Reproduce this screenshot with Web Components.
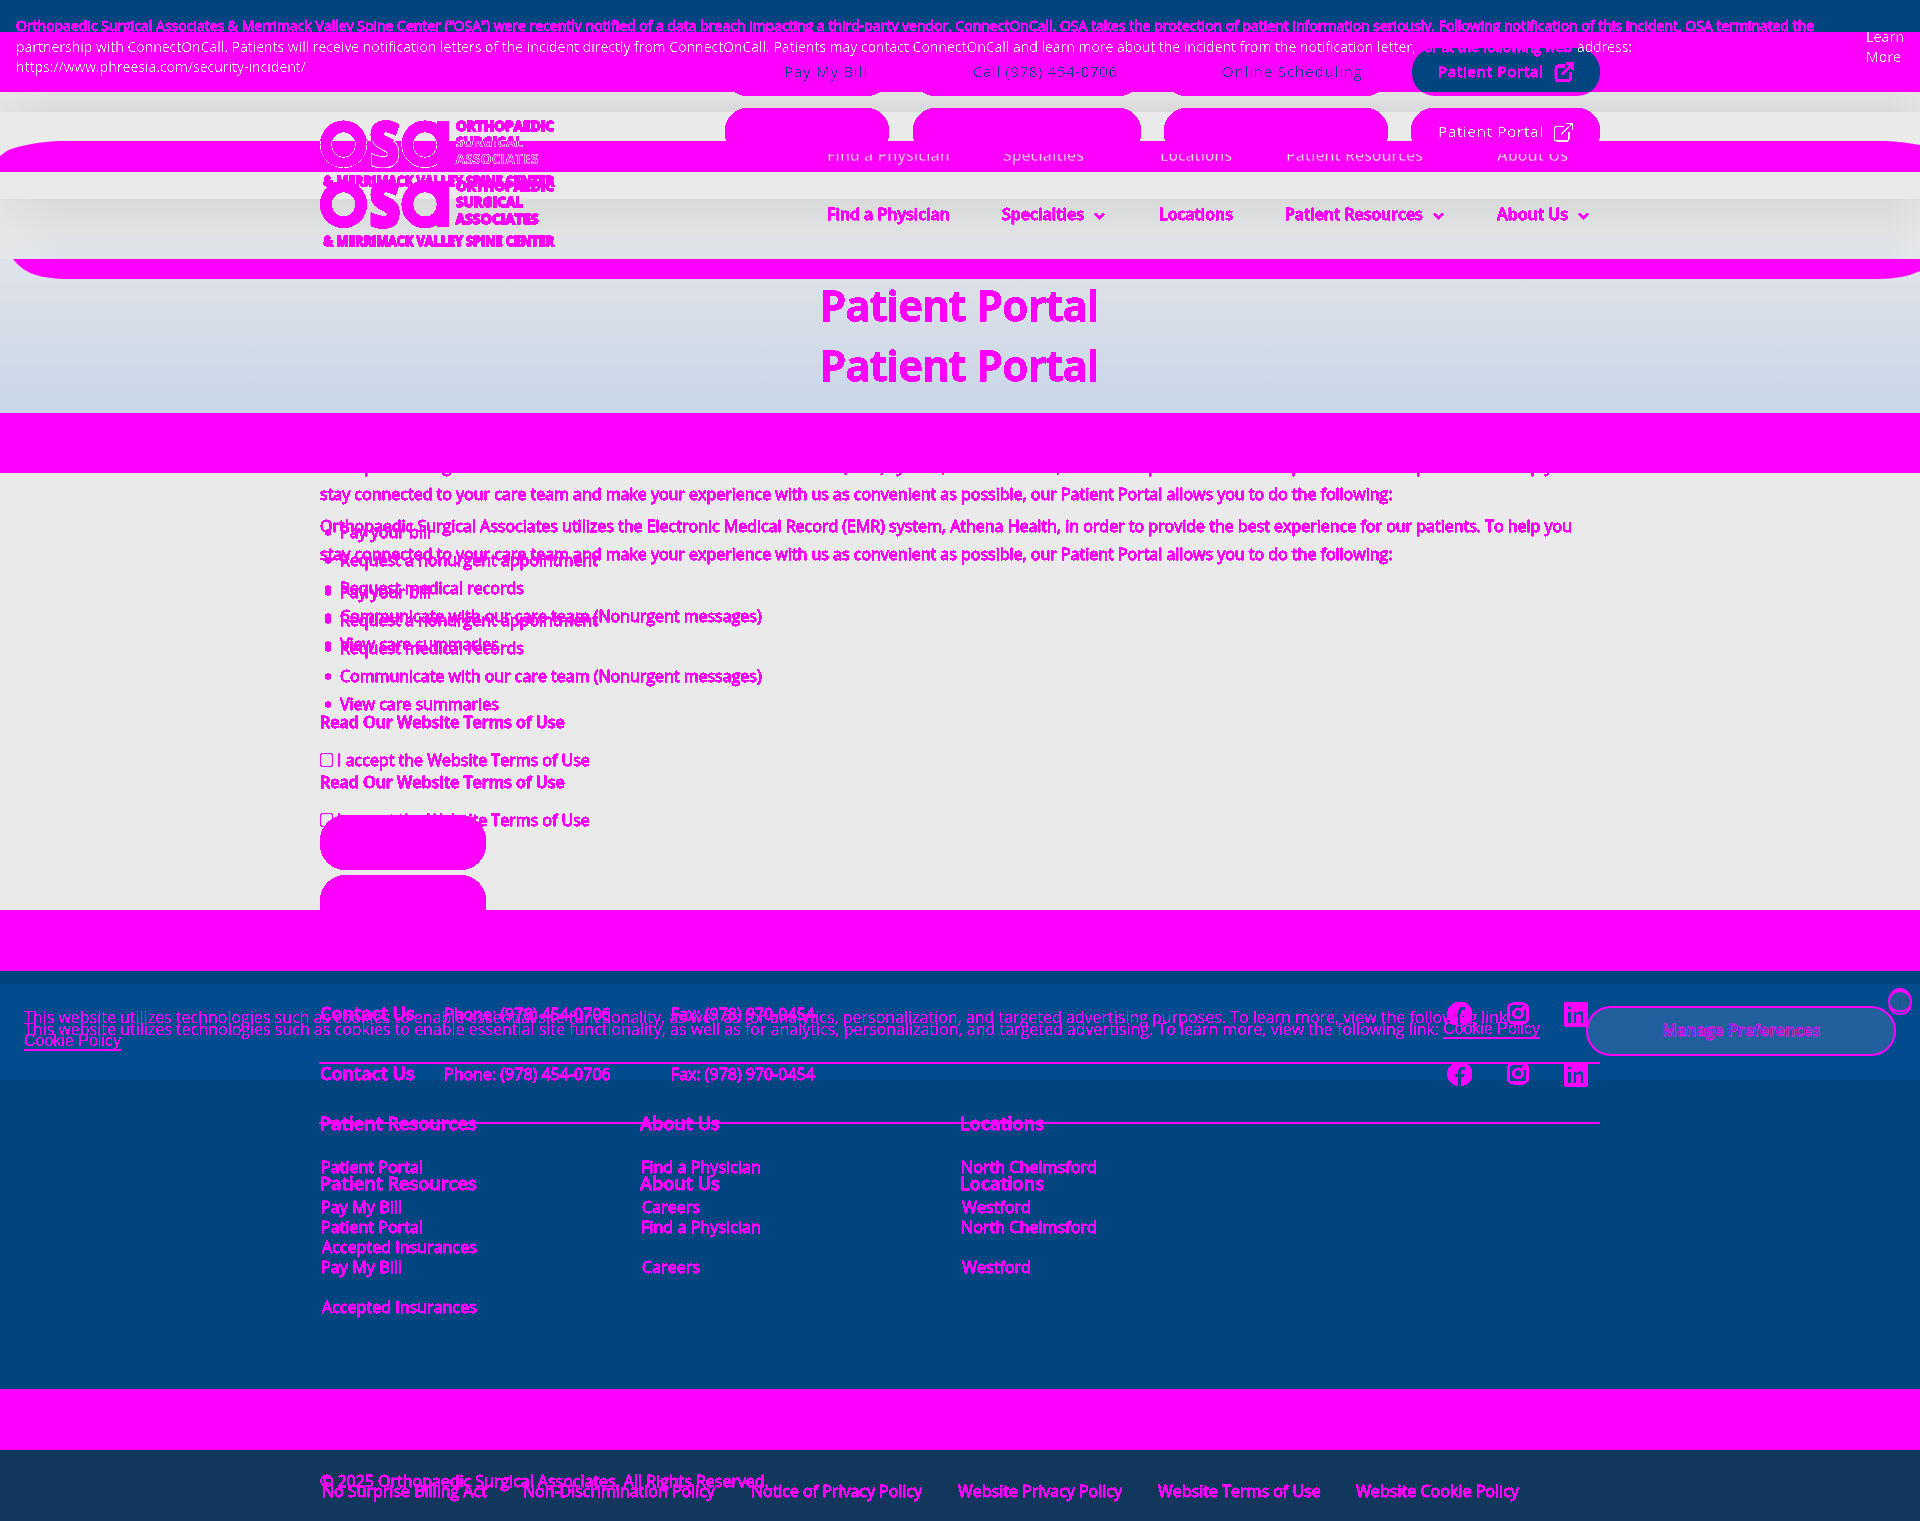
<!DOCTYPE html>
<html lang="en">
<head>
<meta charset="utf-8">
<title>Patient Portal</title>
<style>
html,body{margin:0;padding:0}
body{width:1920px;height:1521px;overflow:hidden;font-family:"Open Sans","Noto Sans",sans-serif;background:#eaeaea}
</style>
</head>
<body>
<portal-page></portal-page>
<script>
const M = '#ff00ff', BLUE = '#004480', LIGHT = '#eaeaea';
const FAMILY = '"Open Sans","Noto Sans",sans-serif';
const ctx = document.createElement('canvas').getContext('2d');

function shadow(el, html) {
  const t = document.createElement('template');
  t.innerHTML = html;
  const root = el.attachShadow({mode: 'open'});
  root.appendChild(t.content.cloneNode(true));
  return root;
}

/* One line of text sized to a given width. */
customElements.define('fit-text', class extends HTMLElement {
  connectedCallback() {
    if (this.shadowRoot) return;
    const w = +this.getAttribute('w'), weight = this.getAttribute('weight') || 400;
    const fam = this.getAttribute('family') || FAMILY;
    const text = this.textContent;
    let fs = +this.getAttribute('size'), ls = 0;
    ctx.font = `${weight} 100px ${fam}`;
    const m = ctx.measureText(text).width / 100;
    if (fs) ls = (w - m * fs) / Math.max(1, text.length - 1); else fs = w / m;
    const ru = Math.round(1.069 * fs), rd = Math.round(.293 * fs);
    this.top = Math.round(+this.getAttribute('base') - ((20 - ru - rd) / 2 + ru));
    shadow(this, `<style>:host{display:block;flex:none;box-sizing:border-box;width:${w}px;height:20px;line-height:20px;white-space:pre;
      font:${weight} ${fs}px/20px ${fam.replace(/"/g, "'")};letter-spacing:${ls}px}</style><slot></slot>`);
  }
});

/* Logo: ring, letter, ring with a stem, and the name beside and below. */
customElements.define('osa-logo', class extends HTMLElement {
  connectedCallback() {
    const line = this.hasAttribute('outline');
    const paint = line ? `fill="${M}" stroke="${LIGHT}" stroke-width="1.1"` : `fill="${M}" stroke="${M}" stroke-width="1"`;
    shadow(this, `<style>:host{display:block;flex:none;width:236px;height:70px;-webkit-text-stroke:0}svg{display:block}text{font-family:${FAMILY}}
      .clip{clip-path:inset(21px 0 18px 0)}</style>
      <svg width="236" height="70" class="${line ? 'clip' : ''}">
      <g ${line ? `fill="none" stroke="${LIGHT}" stroke-width="1"` : `fill="none" stroke="${M}" stroke-width="11.3"`}>
      ${line ? '<ellipse cx="23.5" cy="24.4" rx="23.4" ry="23.4"/><ellipse cx="23.5" cy="24.4" rx="12" ry="13"/><ellipse cx="105" cy="24.4" rx="23.4" ry="23.4"/><ellipse cx="105" cy="24.4" rx="12" ry="13"/>'
             : '<ellipse cx="23.5" cy="24.4" rx="17.6" ry="18"/><ellipse cx="105" cy="24.4" rx="17.6" ry="18"/>'}</g>
      <rect x="117" y="1" width="12" height="45.5" fill="${M}"/>
      <text ${paint} x="48.5" y="47" font-size="81" font-weight="800" textLength="33" lengthAdjust="spacingAndGlyphs">s</text>
      <g ${line ? `fill="${M}" stroke="${LIGHT}" stroke-width=".7"` : `fill="${M}" stroke="${M}" stroke-width=".9"`} font-weight="700" font-size="14">
      <text x="136" y="11" textLength="98" lengthAdjust="spacingAndGlyphs">ORTHOPAEDIC</text>
      <text x="136" y="27.400" textLength="67" lengthAdjust="spacingAndGlyphs">SURGICAL</text>
      <text x="135.5" y="44" textLength="83" lengthAdjust="spacingAndGlyphs">ASSOCIATES</text>
      <text x="3.5" y="65.800" textLength="230.5" lengthAdjust="spacingAndGlyphs">&amp; MERRIMACK VALLEY SPINE CENTER</text>
      </g></svg>`);
  }
});

const ICONS = {
  fb: `<path fill="${M}" fill-rule="evenodd" d="M12 0a12 12 0 0 0-2 23.9V15.500H7v-3.500h3V9.300C10 6.300 11.800 4.700 14.500 4.700c1.300 0 2.600.2 2.600.2v3h-1.500c-1.500 0-1.900.9-1.900 1.800V12H17l-.5 3.500h-2.800v8.400A12 12 0 0 0 12 0z"/>`,
  ig: `<g fill="none" stroke="${M}" stroke-width="2.300"><rect x="2.200" y="2.800" width="19.600" height="19.200" rx="5"/><circle cx="12" cy="12.400" r="4.500"/></g><circle cx="17.600" cy="7" r="1.700" fill="${M}"/>`,
  li: `<path fill="${M}" fill-rule="evenodd" d="M2 0h20a2 2 0 0 1 2 2v20.600a2 2 0 0 1-2 2H2a2 2 0 0 1-2-2V2a2 2 0 0 1 2-2zM4 9.300V21.200h3V9.300zM5.500 4a1.800 1.800 0 1 0 0 3.700 1.800 1.800 0 0 0 0-3.700zM9.500 9.300V21.200h3v-6.300c0-3.600 4.300-3.800 4.300 0v6.300h3v-7.600c0-5.500-5.300-5.700-7.400-2.800V9.300z"/>`,
  chev: `<path fill="none" stroke="${M}" stroke-width="2.400" d="M1 .5l4.500 4.500L10 .5"/>`,
  ext: `<path fill="none" stroke="${M}" stroke-width="2.300" d="M11 4H4.500a2.500 2.500 0 0 0-2.500 2.500V16a2.500 2.500 0 0 0 2.500 2.500H14a2.500 2.500 0 0 0 2.500-2.500V10M8 12.500L17.500 3M12.500 1.600h6.300V8"/>`,
  extthin: `<path fill="none" stroke="${LIGHT}" stroke-width="1.300" d="M11 4.500H3.500a2 2 0 0 0-2 2V17a2 2 0 0 0 2 2H14a2 2 0 0 0 2-2V9.500M8 12.500L19 2M13 1.500h6.500V8"/>`,
  box: `<rect x=".5" y=".5" width="12" height="13" rx="1.500" fill="none" stroke="${M}"/>`,
  dot: `<circle cx="3" cy="2.500" r="2.900" fill="${M}"/>`,
  ring: `<ellipse cx="12" cy="13.500" rx="11.500" ry="13" fill="#1f5c96"/><path d="M12 6v15M3 16c6 2 12 2 18-1" stroke="#1a5590" fill="none"/><path fill="${M}" fill-rule="evenodd" d="M12 0a12 13.500 0 0 1 12 14H22.300a10.300 10 0 0 0-20.600 0H0A12 13.500 0 0 1 12 0z"/><path d="M1 13c0 7.500 5 10.200 11 10.200S23 20 23 13M1 18c3.500 11 18.500 11 22 0" fill="none" stroke="${M}" stroke-width="1.700"/>`
};
customElements.define('ui-icon', class extends HTMLElement {
  connectedCallback() {
    const w = this.getAttribute('w'), h = this.getAttribute('h');
    shadow(this, `<style>:host{display:block;flex:none;width:${w}px;height:${h}px}svg{display:block;overflow:visible}</style>
      <svg width="${w}" height="${h}">${ICONS[this.getAttribute('name')]}</svg>`);
  }
});

customElements.define('pill-box', class extends HTMLElement {
  connectedCallback() {
    shadow(this, `<style>:host{display:block;flex:none;box-sizing:border-box;width:${this.getAttribute('w')}px;height:${this.getAttribute('h')}px;
      border-radius:${this.getAttribute('r') || 0}px;background:${this.getAttribute('bg') || M};border:${this.getAttribute('bd') || 'none'}}</style>`);
  }
});

/* Horizontal background bands, top to bottom. */
customElements.define('page-bands', class extends HTMLElement {
  connectedCallback() {
    const band = (h, bg, inner = '') => `<div style="height:${h}px;background:${bg}">${inner}</div>`;
    const side = 'linear-gradient(90deg,rgba(234,234,234,.5),rgba(234,234,234,0) 60px,rgba(234,234,234,0) 1890px,rgba(234,234,234,.4))';
    shadow(this, `<style>:host{display:flex;flex-direction:column;width:1920px;height:1521px}div{flex:none}svg{display:block}</style>` +
      band(32, BLUE) + band(60, M) +
      band(20, side + ',linear-gradient(#e2e2e2,#d9d9d9)') +
      band(29, LIGHT) +
      band(31, LIGHT, `<svg width="1920" height="31"><path fill="${M}" d="M0 15Q9 7 22 5Q38 1 58 0H1887Q1905 1 1920 4V31H0z"/></svg>`) +
      band(27, LIGHT) +
      band(60, side + ',linear-gradient(#d9dad9,#e0e2e4 60%,#dfe4eb)') +
      band(20, '#dee3eb', `<svg width="1920" height="20"><path fill="${M}" d="M13 0H1920V12Q1903 20 1879 20H64Q45 19 36 16Q22 12 13 0z"/></svg>`) +
      band(134, 'linear-gradient(#dde1e8,#c8d6e9)') +
      band(60, M) + band(437, LIGHT) + band(61, M) +
      band(13, BLUE) + band(96, '#004b8d') + band(309, BLUE) +
      band(61, M) + band(71, '#12375d'));
  }
});

/* A sheet stacks rows; each row keeps its items side by side. */
customElements.define('content-sheet', class extends HTMLElement {
  set rows(rows) {
    const f = this.getAttribute('mode');
    const tf = {dense: [12, -1.3], mid: [12, -4], thin: [12, -6.8]}[f];
    const root = shadow(this, `<style>:host{display:block;width:1920px;height:1521px;overflow:hidden}
      .stack{display:flex;flex-direction:column;${tf ? 'filter:url(#edge);' : ''}${f === 'dense' ? '-webkit-text-stroke:.45px ' + M + ';' : ''}}
      .row{display:flex;align-items:flex-start;flex:none}
      .half{clip-path:inset(9px 0 0 0);-webkit-text-stroke:.6px ${M}} .u{border-bottom:2px solid ${M}} .big{-webkit-text-stroke:1.1px ${M}} .mottle{-webkit-text-stroke:.8px ${M}}
      svg.defs{position:absolute;width:0;height:0}</style>
      ${tf ? `<svg class="defs"><filter id="edge" x="0" y="0" width="1920" height="1521" filterUnits="userSpaceOnUse" color-interpolation-filters="sRGB">
      <feComponentTransfer><feFuncA type="linear" slope="${tf[0]}" intercept="${tf[1]}"/></feComponentTransfer></filter></svg>` : ''}
      <div class="stack"></div>`);
    const stack = root.querySelector('.stack');
    const lift = f === 'dense' ? 1 : 0;
    let bottom = 0;
    for (const r of rows) {
      const row = document.createElement('div');
      row.className = 'row';
      row.style.height = r.h + 'px';
      row.style.marginTop = (r.y - bottom) + 'px';
      bottom = r.y + r.h;
      stack.appendChild(row);
      let right = 0;
      for (const it of r.items) {
        const el = document.createElement(it.tag);
        for (const k in it.a) el.setAttribute(k, it.a[k]);
        if (it.cls) el.className = it.cls;
        if (it.color) el.style.color = it.color;
        if (it.text) el.textContent = it.text;
        row.appendChild(el);
        const top = it.y !== undefined ? it.y : el.top - lift;
        el.style.marginTop = (top - r.y) + 'px';
        el.style.marginLeft = (it.x - right) + 'px';
        right = it.x + it.a.w;
      }
    }
  }
});

const T = (x, base, x2, text, o = {}) => ({tag: 'fit-text', x, text, color: o.color || M, cls: o.cls,
  a: Object.assign({w: x2 - x, base, weight: o.weight || 400}, o.size ? {size: o.size} : {}, o.family ? {family: o.family} : {})});
const I = (name, x, y, w, h) => ({tag: 'ui-icon', x, y, a: {name, w, h}});
const P = (x, y, w, h, r, bg, bd) => ({tag: 'pill-box', x, y, a: Object.assign({w, h, r}, bg ? {bg} : {}, bd ? {bd} : {})});
const R = (y, h, ...items) => ({y, h, items});

/* One copy of the page content, shifted down by d. */
function copy(d, lower) {
  const rows = [];
  if (!lower) rows.push(
    R(16, 20, T(16, 32, 1815, 'Orthopaedic Surgical Associates & Merrimack Valley Spine Center (“OSA”) were recently notified of a data breach impacting a third-party vendor, ConnectOnCall. OSA takes the protection of patient information seriously. Following notification of this incident, OSA terminated the')),
    R(37, 10, T(1424, 53, 1572, 'or at the following web')));
  const pills = [P(725, 48 + d, 164, 48, 23), P(913, 48 + d, 228, 48, 23), P(1164, 48 + d, 224, 48, 23)];
  if (lower) pills.push(P(1411, 48 + d, 189, 48, 23));
  rows.push(R(48 + d, 48, ...pills, ...(lower ? [] : [T(1438, 78, 1543, 'Patient Portal', {size: 15, weight: 500}), I('ext', 1554, 62, 20, 20)])));
  const nav = lower ? [
    T(827, 221, 950, 'Find a Physician', {weight: 600}), T(1002, 221, 1084, 'Specialties', {weight: 600}), I('chev', 1094, 213, 11, 7),
    T(1159, 221, 1233, 'Locations', {weight: 600}), T(1285, 221, 1423, 'Patient Resources', {weight: 600}), I('chev', 1433, 213, 11, 7),
    T(1497, 221, 1568, 'About Us', {weight: 600}), I('chev', 1578, 213, 11, 7)] : [];
  rows.push(R(120 + d, 70, {tag: 'osa-logo', x: 320, y: 120 + d, a: {w: 236}}, ...nav));
  rows.push(R(290 + d, 40, T(820, 322 + d, 1099, 'Patient Portal', {weight: 600, cls: 'big'})));
  const p = (y, x2, s) => R(y - 16 + d, 20, T(320, y + d, x2, s));
  rows.push(p(473, 1572, 'Orthopaedic Surgical Associates utilizes the Electronic Medical Record (EMR) system, Athena Health, in order to provide the best experience for our patients. To help you'));
  rows.push(p(501, 1393, 'stay connected to your care team and make your experience with us as convenient as possible, our Patient Portal allows you to do the following:'));
  [[539, 431, 'Pay your bill'], [567, 598, 'Request a nonurgent appointment'], [595, 524, 'Request medical records'],
   [623, 762, 'Communicate with our care team (Nonurgent messages)'], [651, 499, 'View care summaries']]
    .forEach(([y, x2, s]) => rows.push(R(y - 16 + d, 20, I('dot', 325, y - 9 + d, 6, 6), T(340, y + d, x2, s))));
  rows.push(R(713 + d, 20, T(320, 729 + d, 565, 'Read Our Website Terms of Use', {weight: 600})));
  rows.push(R(751 + d, 20, I('box', 320, 753 + d, 14, 14), T(337, 767 + d, 590, 'I accept the Website Terms of Use')));
  rows.push(R(815 + d, 55, P(320, 815 + d, 166, 55, 26)));
  rows.push(R(1002 + d, 26, T(320, 1021 + d, 415, 'Contact Us', {weight: 600}), T(444, 1021 + d, 611, 'Phone: (978) 454-0706'), T(671, 1021 + d, 815, 'Fax: (978) 970-0454'),
    I('fb', 1448, 1002 + d, 24, 25), I('ig', 1506, 1001 + d, 24, 25), I('li', 1564, 1002 + d, 24, 25)));
  rows.push(R(1062 + d, 2, P(319, 1062 + d, 1281, 2, 0)));
  rows.push(R(1112 + d, 20, T(320, 1131 + d, 477, 'Patient Resources', {weight: 600}), T(640, 1131 + d, 720, 'About Us', {weight: 600}), T(960, 1131 + d, 1044, 'Locations', {weight: 600})));
  rows.push(R(1156 + d, 20, T(321, 1174 + d, 423, 'Patient Portal'), T(641, 1174 + d, 761, 'Find a Physician'), T(961, 1174 + d, 1097, 'North Chelmsford')));
  rows.push(R(1196 + d, 20, T(321, 1214 + d, 402, 'Pay My Bill'), T(642, 1214 + d, 700, 'Careers'), T(962, 1214 + d, 1031, 'Westford')));
  rows.push(R(1236 + d, 20, T(322, 1254 + d, 477, 'Accepted Insurances')));
  if (lower) rows.push(R(1472, 20, T(320, 1488, 769, '© 2025 Orthopaedic Surgical Associates, All Rights Reserved.')));
  else rows.push(R(1482, 20, T(322, 1498, 487, 'No Surprise Billing Act'), T(523, 1498, 715, 'Non-Discrimination Policy'), T(751, 1498, 922, 'Notice of Privacy Policy'),
    T(958, 1498, 1122, 'Website Privacy Policy'), T(1158, 1498, 1321, 'Website Terms of Use'), T(1356, 1498, 1519, 'Website Cookie Policy')));
  return rows;
}

const NAVY = {color: BLUE, size: 15}, L = {color: LIGHT}, H = {color: LIGHT, weight: 600, cls: 'half'};
const ARIAL = '"Liberation Sans",sans-serif';
const light = [
  R(25, 10, T(1866, 42, 1904, 'Learn', L)),
  R(36, 10, T(16, 52, 1417, 'partnership with ConnectOnCall. Patients will receive notification letters of the incident directly from ConnectOnCall. Patients may contact ConnectOnCall and learn more about the incident from the notification letter,', L), T(1577, 52, 1632, 'address:', L)),
  R(46, 10, T(1866, 62, 1901, 'More', L)),
  R(57, 5, T(16, 72, 306, 'https://www.phreesia.com/security-incident/', L)),
  R(62, 20, T(784, 77, 867, 'Pay My Bill', NAVY), T(973, 77, 1117, 'Call (978) 454-0706', NAVY), T(1222, 77, 1362, 'Online Scheduling', NAVY)),
  R(118, 2, T(1438, 137, 1543, 'Patient Portal', {color: LIGHT, size: 15}), I('extthin', 1553, 122, 20, 19)),
  {y: 120, h: 70, items: [{tag: 'osa-logo', x: 320, y: 120, a: {w: 236, outline: ''}},
    T(827, 161, 950, 'Find a Physician', H), T(1003, 161, 1084, 'Specialties', H), T(1160, 161, 1232, 'Locations', H), T(1286, 161, 1423, 'Patient Resources', H), T(1497, 161, 1568, 'About Us', H)]}
];
const cookies = [
  R(1008, 12, T(24, 1023, 1513, 'This website utilizes technologies such as cookies to enable essential site functionality, as well as for analytics, personalization, and targeted advertising purposes. To learn more, view the following link:')),
  R(1020, 12, T(24, 1035, 1440, 'This website utilizes technologies such as cookies to enable essential site functionality, as well as for analytics, personalization, and targeted advertising. To learn more, view the following link:'),
    T(1443, 1035, 1540, 'Cookie Policy', {family: ARIAL, cls: 'u'})),
  R(1032, 20, T(24, 1047, 121, 'Cookie Policy', {family: ARIAL, cls: 'u'}))
];
const shapes = [
  R(48, 48, P(1412, 48, 188, 48, 23, `linear-gradient(${BLUE} 44px,${M} 44px)`)),
  R(988, 68, P(1586, 1006, 310, 50, 25, '#21609c', `2px solid ${M}`), I('ring', 1888, 988, 24, 27))
];
const prefs = [R(1020, 22, T(1662, 1036, 1820, 'Manage Preferences', {weight: 600, color: '#0b4d8a', cls: 'mottle'}))];

customElements.define('portal-page', class extends HTMLElement {
  connectedCallback() {
    const root = shadow(this, `<style>:host{display:grid;width:1920px;height:1521px;overflow:hidden}
      :host>*,page-bands,content-sheet{grid-area:1/1}</style><page-bands></page-bands>
      <content-sheet></content-sheet><content-sheet mode="dense"></content-sheet><content-sheet mode="dense"></content-sheet>
      <content-sheet mode="mid"></content-sheet><content-sheet mode="thin"></content-sheet><content-sheet></content-sheet>`);
    const data = [shapes, copy(0, false), copy(60, true), cookies, light, prefs];
    root.querySelectorAll('content-sheet').forEach((s, i) => { s.rows = data[i]; });
  }
});
</script>
</body>
</html>
